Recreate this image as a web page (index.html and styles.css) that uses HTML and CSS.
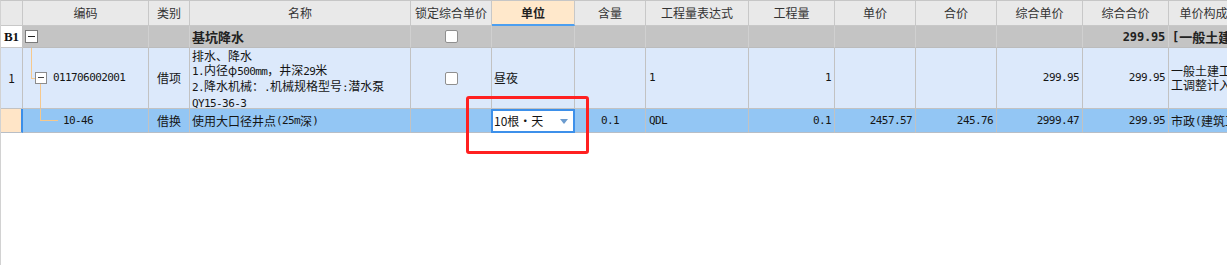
FILE: index.html
```html
<!DOCTYPE html>
<html lang="zh-CN">
<head>
<meta charset="utf-8">
<title>分部分项</title>
<link rel="stylesheet" href="styles.css">
</head>
<body>
<div class="sheet">
  <div class="row head">
    <div class="cell"></div>
    <div class="cell">编码</div>
    <div class="cell">类别</div>
    <div class="cell">名称</div>
    <div class="cell">锁定综合单价</div>
    <div class="cell active">单位</div>
    <div class="cell">含量</div>
    <div class="cell">工程量表达式</div>
    <div class="cell">工程量</div>
    <div class="cell">单价</div>
    <div class="cell">合价</div>
    <div class="cell">综合单价</div>
    <div class="cell">综合合价</div>
    <div class="cell">单价构成</div>
  </div>

  <div class="row section">
    <div class="cell rowhead b1">B1</div>
    <div class="cell code-b1"><span class="tog big"></span></div>
    <div class="cell"></div>
    <div class="cell title">基坑降水</div>
    <div class="cell center"><span class="chk"></span></div>
    <div class="cell"></div>
    <div class="cell"></div>
    <div class="cell"></div>
    <div class="cell"></div>
    <div class="cell"></div>
    <div class="cell"></div>
    <div class="cell"></div>
    <div class="cell num bold">299.95</div>
    <div class="cell left3 bold"><span class="latb">[</span>一般土建工程</div>
  </div>

  <div class="row item">
    <div class="cell center">1</div>
    <div class="cell code-1">
      <span class="tl v1"></span><span class="tl h1"></span><span class="tl v2"></span>
      <span class="tog"></span><span class="codetxt">011706002001</span>
    </div>
    <div class="cell center">借项</div>
    <div class="cell desc"><div>排水、降水<br><span class="lat">1.</span>内径φ<span class="lat">500mm</span>，井深<span class="lat">29</span>米<br><span class="lat">2.</span>降水机械：<span class="lat">.</span>机械规格型号<span class="lat">:</span>潜水泵<br><span class="lat">QY15-36-3</span></div></div>
    <div class="cell center"><span class="chk"></span></div>
    <div class="cell">昼夜</div>
    <div class="cell"></div>
    <div class="cell left3"><span class="lat">1</span></div>
    <div class="cell num">1</div>
    <div class="cell"></div>
    <div class="cell"></div>
    <div class="cell num">299.95</div>
    <div class="cell num">299.95</div>
    <div class="cell wrap"><div>一般土建工程<br>工调整计入</div></div>
  </div>

  <div class="row sub">
    <div class="cell rowhead cur"></div>
    <div class="cell code-2">
      <span class="tl v3"></span><span class="tl h2"></span>
      <span class="lat">10-46</span>
    </div>
    <div class="cell center">借换</div>
    <div class="cell">使用大口径井点<span class="lat">(25m</span>深<span class="lat">)</span></div>
    <div class="cell"></div>
    <div class="cell editing">
      <div class="editor"><span>10根·天</span><span class="drop"></span></div>
    </div>
    <div class="cell center"><span class="lat">0.1</span></div>
    <div class="cell left3"><span class="lat">QDL</span></div>
    <div class="cell num">0.1</div>
    <div class="cell num">2457.57</div>
    <div class="cell num">245.76</div>
    <div class="cell num">2999.47</div>
    <div class="cell num">299.95</div>
    <div class="cell">市政<span class="lat">(</span>建筑工程</div>
  </div>

  <div class="mark"></div>
</div>
</body>
</html>
```

FILE: styles.css
```css
html, body {
  margin: 0;
  padding: 0;
  background: #ffffff;
}

body {
  font-family: "Noto Sans CJK SC", "Noto Sans", sans-serif;
  font-size: 12px;
  color: #151515;
}

.sheet {
  position: relative;
  width: 1227px;
  height: 265px;
  box-sizing: border-box;
  border-left: 1px solid #d2d2d2;
  border-top: 1px solid #c6c6c6;
  overflow: hidden;
  background: #ffffff;
}

.row {
  display: grid;
  grid-template-columns: 22px 126px 41px 221px 81px 83px 71px 103px 86px 81px 81px 86px 86px 70px;
  width: 1238px;
}

.cell {
  position: relative;
  box-sizing: border-box;
  display: flex;
  align-items: center;
  padding: 0 2px;
  border-right: 1px solid #c2c2c2;
  border-bottom: 1px solid #c2c2c2;
  white-space: nowrap;
  overflow: hidden;
  line-height: 14px;
}

/* header */
.head {
  height: 25px;
  background: #e9e9e9;
  color: #333333;
}
.head .cell {
  justify-content: center;
  border-color: #c8c8c8;
}
.head .cell.active {
  background: #ffe8cb;
  border-bottom: 2px solid #4d9ff0;
  font-weight: bold;
  color: #222222;
}

/* section row */
.section {
  height: 22px;
  background: #c4c4c4;
}
.section .cell {
  border-right-color: #d0d0d0;
  border-bottom-color: #bcbcbc;
}
.section .rowhead {
  background: #ffffff;
  border-right-color: #c2c2c2;
  border-bottom-color: #c8c8c8;
}
.b1 {
  justify-content: center;
  font-family: "Liberation Serif", serif;
  font-weight: bold;
  font-size: 13px;
  color: #111111;
}
.title {
  font-weight: bold;
  font-size: 13px;
  color: #222222;
}
.bold {
  font-weight: bold;
  font-size: 13px;
  color: #222222;
}
.bold.num {
  font-size: 12px;
  letter-spacing: -0.2px;
}
.latb {
  font-family: "DejaVu Sans Mono", monospace;
  font-size: 12px;
}

/* item row */
.item {
  height: 61px;
  background: #dce9fb;
}

.sub {
  height: 24px;
  background: #93c6f4;
}
.sub .cell {
  border-bottom-color: #b8bec6;
}
.sub .rowhead.cur {
  background: #ffe5c7;
  border-right: 2px solid #3b8ee8;
}

.center {
  justify-content: center;
}
.left3 {
  padding-left: 3px;
}
.num {
  justify-content: flex-end;
  padding-right: 3px;
  font-family: "DejaVu Sans Mono", monospace;
  font-size: 11px;
  letter-spacing: -0.6px;
}
.lat {
  font-family: "DejaVu Sans Mono", monospace;
  font-size: 11px;
  letter-spacing: -0.6px;
}

.desc {
  align-items: flex-start;
  padding-top: 1px;
  line-height: 14px;
}
.wrap {
  line-height: 14px;
}

/* tree */
.code-b1 {
  padding-left: 2px;
}
.code-1 {
  padding-left: 12px;
}
.code-2 {
  padding-left: 40px;
}
.codetxt {
  margin-left: 6px;
  font-family: "DejaVu Sans Mono", monospace;
  font-size: 11px;
  letter-spacing: -0.6px;
}
.tog {
  position: relative;
  box-sizing: border-box;
  width: 12px;
  height: 12px;
  border: 1px solid #8c8c8c;
  background: #ffffff;
  flex: none;
}
.tog::before {
  content: "";
  position: absolute;
  left: 2px;
  right: 2px;
  top: 4px;
  height: 1px;
  background: #444444;
}
.tog.big {
  width: 13px;
  height: 13px;
  border-color: #7a7a7a;
}
.tog.big::before {
  top: 5px;
  background: #222222;
}
.tl {
  position: absolute;
  background: #f6c88c;
}
.v1 {
  left: 8px;
  top: 0;
  width: 1px;
  height: 30px;
}
.h1 {
  left: 8px;
  top: 30px;
  width: 4px;
  height: 1px;
}
.v2 {
  left: 17px;
  top: 36px;
  bottom: 0;
  width: 1px;
}
.v3 {
  left: 17px;
  top: 0;
  width: 1px;
  height: 11px;
}
.h2 {
  left: 17px;
  top: 11px;
  width: 18px;
  height: 1px;
}

/* checkbox */
.chk {
  box-sizing: border-box;
  width: 13px;
  height: 13px;
  border: 1px solid #8f8f8f;
  border-radius: 2px;
  background: #ffffff;
}

/* editor */
.editing {
  overflow: visible;
}
.editor {
  position: absolute;
  left: -1px;
  right: -1px;
  top: 0;
  bottom: -1px;
  box-sizing: border-box;
  border: 2px solid #3d90ea;
  background: #ffffff;
  display: flex;
  align-items: center;
  justify-content: space-between;
  padding: 0 5px 0 1px;
  z-index: 1;
}
.drop {
  width: 0;
  height: 0;
  border-left: 4px solid transparent;
  border-right: 4px solid transparent;
  border-top: 5px solid #6c9ccf;
}

/* annotation */
.mark {
  position: absolute;
  left: 465px;
  top: 95px;
  width: 123px;
  height: 58px;
  box-sizing: border-box;
  border: 3px solid #ff2020;
  border-radius: 3px;
  z-index: 2;
}
```
